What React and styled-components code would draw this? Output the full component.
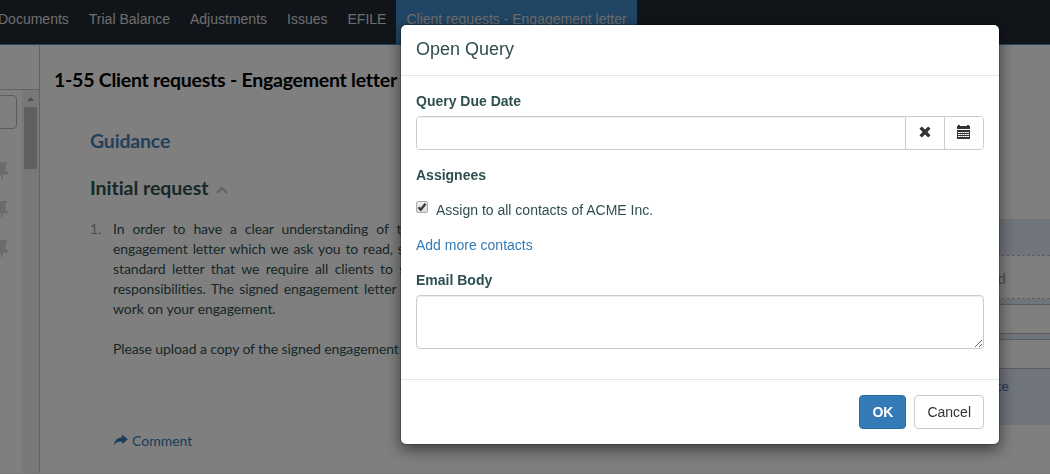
import React from "react";
import styled, { createGlobalStyle } from "styled-components";

const GlobalStyle = createGlobalStyle`
  *, *::before, *::after { box-sizing: border-box; }
  html, body { margin: 0; height: 100%; overflow: hidden; background: #fff; }
  body {
    font: 14px/20px "Liberation Sans", Arial, sans-serif;
    font-variant-ligatures: none;
    color: #2f4f4f;
  }
`;

const Page = styled.div`
  display: flex;
  flex-direction: column;
  width: 1050px;
  height: 474px;
  border-bottom: 1px solid #eee;
  overflow: hidden;
`;

const NavBar = styled.nav`
  display: flex;
  flex: none;
  height: 45px;
  padding-right: 10px;
  background: #222a33;
  border-bottom: 1px solid #428bca;
  margin-left: -12px;
`;

const NavItem = styled.a`
  height: 45px;
  padding: 9px 10px 0;
  white-space: nowrap;
  color: #ddd;
  background: ${(p) => (p.$active ? "#428bca" : "transparent")};
`;

const Columns = styled.div`
  display: flex;
  flex: 1;
  min-height: 0;
`;

const Sidebar = styled.aside`
  display: flex;
  flex-direction: column;
  width: 40px;
  flex: none;
  border-right: 1px solid #c4c4c4;
`;

const SidebarHead = styled.div`
  height: 45px;
  flex: none;
  border-bottom: 1px solid #c4c4c4;
`;

const SidebarBody = styled.div`
  display: flex;
  flex: 1;
`;

const PinList = styled.div`
  width: 22px;
  padding-top: 5px;
  overflow: hidden;
`;

const SearchBox = styled.div`
  width: 37px;
  height: 34px;
  margin: 0 0 33px -20px;
  border: 1px solid #bbb;
  border-radius: 4px;
`;

const Pin = styled.svg`
  display: block;
  width: 18px;
  height: 18px;
  margin: 0 0 21px -9px;
  fill: #d6d6d6;
`;

const ScrollTrack = styled.div`
  width: 17px;
  padding: 7px 2px 0;
  background: #f0f0f0;
`;

const ScrollArrow = styled.svg`
  display: block;
  width: 7px;
  height: 4px;
  margin: 0 auto 6px 3px;
  fill: #a0a0a0;
`;

const ScrollThumb = styled.div`
  height: 62px;
  background: #c1c1c1;
`;

const Main = styled.main`
  width: 640px;
  flex: none;
  padding: 22px 0 0 14px;
  font-family: Lato, sans-serif;
`;

const PageTitle = styled.h1`
  margin: 0;
  font-size: 19.5px;
  line-height: 26px;
  font-weight: 700;
  letter-spacing: -0.24px;
  color: #000;
  white-space: nowrap;
`;

const Article = styled.section`
  padding: 35px 0 0 36px;
`;

const Heading = styled.h2`
  display: flex;
  align-items: center;
  margin: 0 0 ${(p) => p.$gap}px;
  font-size: 19.5px;
  line-height: 26px;
  font-weight: 700;
  letter-spacing: ${(p) => p.$tracking}px;
  color: ${(p) => p.$color};
`;

const Chevron = styled.svg`
  width: 12px;
  height: 8px;
  margin: 4px 0 0 8px;
  fill: none;
  stroke: #c0c0c0;
  stroke-width: 2;
`;

const Item = styled.div`
  display: flex;
  color: #2f4f4f;
`;

const ItemNumber = styled.div`
  width: 23px;
  color: #999;
`;

const Line = styled.div`
  height: 20px;
  white-space: nowrap;
  letter-spacing: -0.1px;
  word-spacing: ${(p) => p.$space || 0}px;
`;

const CommentLink = styled.a`
  display: flex;
  align-items: center;
  margin: 72px 0 0 24px;
  color: #337ab7;

  svg {
    width: 14px;
    height: 12px;
    margin: -3px 4px 0 0;
    fill: currentColor;
  }
`;

const Detail = styled.section`
  flex: 1;
  padding-top: 174px;
  font-family: Lato, sans-serif;
`;

const DetailPanel = styled.div`
  height: 206px;
  padding-top: 36px;
  background: #e1ebf6;
`;

const DropZone = styled.div`
  height: 44px;
  margin-bottom: 5px;
  padding: 12px 0 0 265px;
  border: 1px dashed #bbb;
  border-width: 1px 0;
  background: #fff;
  display: flex;
  font-size: 15px;
`;

const Field = styled.div`
  height: 30px;
  margin-bottom: 5px;
  background: #fff;
  border: solid #bbb;
  border-width: 1px 0;
`;

const TrailingText = styled.div`
  width: ${(p) => p.$width}px;
  padding-top: ${(p) => p.$top || 0}px;
  display: flex;
  justify-content: flex-end;
  white-space: nowrap;
  color: ${(p) => p.$color};
`;

const Backdrop = styled.div`
  position: fixed;
  inset: 0;
  display: flex;
  align-items: flex-start;
  padding: 24px 0 0 400px;
  background: rgba(0, 0, 0, 0.5);
`;

const Dialog = styled.div`
  width: 600px;
  background: #fff;
  background-clip: padding-box;
  border: 1px solid rgba(0, 0, 0, 0.2);
  border-radius: 6px;
  box-shadow: 0 5px 15px rgba(0, 0, 0, 0.5);
`;

const DialogHeader = styled.header`
  height: 51px;
  padding: 11px 15px 0;
  border-bottom: 1px solid #e5e5e5;
  font-size: 18px;
  line-height: 26px;
`;

const DialogBody = styled.div`
  padding: 15px 15px 30px;
`;

const Label = styled.label`
  display: block;
  margin-bottom: 5px;
  font-weight: 700;
`;

const InputGroup = styled.div`
  display: flex;
  height: 34px;
  margin-bottom: 15px;
  border: 1px solid #ccc;
  border-radius: 4px;
  overflow: hidden;
`;

const DateInput = styled.input`
  flex: 1;
  min-width: 0;
  border: 0;
  padding: 6px 12px;
  outline: 0;
  box-shadow: inset 0 1px 1px rgba(0, 0, 0, 0.075);
`;

const Addon = styled.button`
  display: flex;
  align-items: center;
  justify-content: center;
  width: 39px;
  padding: 0;
  border: 0;
  border-left: 1px solid #ccc;
  background: #fff;

  svg { fill: #333; display: block; margin: -2px 1px 0 0; }
`;

const CheckRow = styled.div`
  display: flex;
  align-items: flex-start;
  margin: 15px 0;
  line-height: 20px;
`;

const CheckBox = styled.span`
  display: flex;
  width: 12px;
  height: 12px;
  margin: 1px 8px 0 0;
  border: 1px solid #aaa;
  border-radius: 2px;
  background: linear-gradient(#eee, #dcdcdc);

  svg { width: 10px; height: 10px; fill: none; stroke: #3a3a3a; stroke-width: 2.4; }
`;

const AddLink = styled.a`
  display: block;
  margin-bottom: 15px;
  color: #337ab7;
`;

const EmailBody = styled.textarea`
  display: block;
  width: 100%;
  height: 54px;
  border: 1px solid #ccc;
  border-radius: 4px;
  outline: 0;
  box-shadow: inset 0 1px 1px rgba(0, 0, 0, 0.075);
  resize: vertical;
`;

const DialogFooter = styled.footer`
  display: flex;
  justify-content: flex-end;
  gap: 8px;
  padding: 15px;
  border-top: 1px solid #e5e5e5;
`;

const Button = styled.button`
  height: 34px;
  padding: 0 12px;
  border: 1px solid ${(p) => (p.$primary ? "#2e6da4" : "#ccc")};
  border-radius: 4px;
  background: ${(p) => (p.$primary ? "#337ab7" : "#fff")};
  color: ${(p) => (p.$primary ? "#fff" : "#333")};
  font: ${(p) => (p.$primary ? 700 : 400)} 14px/20px "Liberation Sans", Arial, sans-serif;
`;

const tabs = ["Documents", "Trial Balance", "Adjustments", "Issues", "EFILE", "Client requests - Engagement letter"];

const lines = [
  ["In order to have a clear understanding of the", 4.5],
  ["engagement letter which we ask you to read, sign", 1.5],
  ["standard letter that we require all clients to sign", 3],
  ["responsibilities. The signed engagement letter", 2],
  ["work on your engagement.", 0.4],
  ["", 0],
  ["Please upload a copy of the signed engagement", 0],
];

export default function App() {
  return (
    <>
      <GlobalStyle />
      <Page>
        <NavBar>
          {tabs.map((t, i) => (
            <NavItem key={t} $active={i === tabs.length - 1}>{t}</NavItem>
          ))}
        </NavBar>
        <Columns>
          <Sidebar>
            <SidebarHead />
            <SidebarBody>
              <PinList>
                <SearchBox />
                {[0, 1, 2].map((i) => (
                  <Pin key={i} viewBox="0 0 18 18">
                    <path d="M4 0h12v2l-1.500 1v6c2 .8 3.300 1.800 3.500 3.500h-6.200L11.500 17.500H10.300L9.500 12.500H2C2.200 10.800 3.500 9.800 5.500 9V3L4 2z" />
                  </Pin>
                ))}
              </PinList>
              <ScrollTrack>
                <ScrollArrow viewBox="0 0 7 4"><path d="M3.500 0L7 4H0z" /></ScrollArrow>
                <ScrollThumb />
              </ScrollTrack>
            </SidebarBody>
          </Sidebar>
          <Main>
            <PageTitle>1-55 Client requests - Engagement letter</PageTitle>
            <Article>
              <Heading $gap={21} $tracking={-0.18} $color="#4682b4">Guidance</Heading>
              <Heading $gap={18} $tracking={-0.04} $color="#2f4f4f">
                Initial request
                <Chevron viewBox="0 0 12 8"><path d="M1 7l5-5 5 5" /></Chevron>
              </Heading>
              <Item>
                <ItemNumber>1.</ItemNumber>
                <div>
                  {lines.map(([text, space], i) => (
                    <Line key={i} $space={space}>{text}</Line>
                  ))}
                </div>
              </Item>
              <CommentLink>
                <svg viewBox="0 0 15 12"><path d="M8.500 0L15 5.200 8.500 10.500V7.500C4.500 7.300 2 8.300 0 11.500 .6 6.500 3.500 3.300 8.500 3z" /></svg>
                Comment
              </CommentLink>
            </Article>
          </Main>
          <Detail>
            <DetailPanel>
              <DropZone><TrailingText $width={61} $color="#999">Upload</TrailingText></DropZone>
              <Field />
              <Field />
              <TrailingText $width={329} $top={2} $color="#337ab7">Add balance</TrailingText>
            </DetailPanel>
          </Detail>
        </Columns>
      </Page>
      <Backdrop>
        <Dialog role="dialog">
          <DialogHeader>Open Query</DialogHeader>
          <DialogBody>
            <Label>Query Due Date</Label>
            <InputGroup>
              <DateInput />
              <Addon>
                <svg width="12" height="12" viewBox="0 0 12 12"><path d="M2.800.5L6 3.600 9.200.5 11.500 2.800 8.400 6l3.100 3.200-2.300 2.300L6 8.400 2.800 11.500.5 9.200 3.600 6 .5 2.800z" /></svg>
              </Addon>
              <Addon>
                <svg width="13" height="14" viewBox="0 0 13 14">
                  <path d="M0 1h1V0h2v1h7V0h2v1h1v3H0zM0 5h13v9H0z" />
                  <path d="M1 7.500h11M1 9.500h11M1 11.500h11" stroke="#fff" strokeWidth="1" strokeDasharray="2 .3" />
                </svg>
              </Addon>
            </InputGroup>
            <Label>Assignees</Label>
            <CheckRow>
              <CheckBox><svg viewBox="0 0 10 10"><path d="M1.500 5.200l2.300 2.500L8.500 1.700" /></svg></CheckBox>
              Assign to all contacts of ACME Inc.
            </CheckRow>
            <AddLink>Add more contacts</AddLink>
            <Label>Email Body</Label>
            <EmailBody />
          </DialogBody>
          <DialogFooter>
            <Button $primary>OK</Button>
            <Button>Cancel</Button>
          </DialogFooter>
        </Dialog>
      </Backdrop>
    </>
  );
}
